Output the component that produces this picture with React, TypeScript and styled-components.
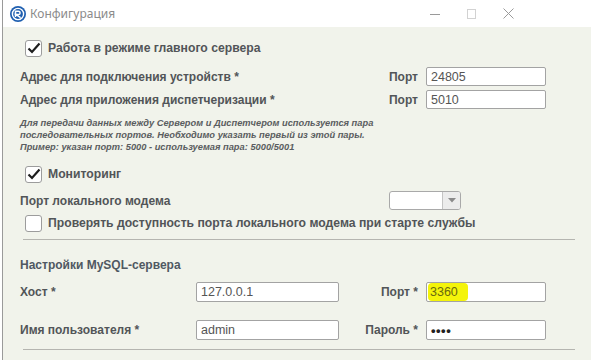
import React from "react";
import styled, { createGlobalStyle } from "styled-components";

const Global = createGlobalStyle`
  html, body { margin: 0; padding: 0; width: 591px; height: 360px; overflow: hidden; background: #ffffff; }
  * { box-sizing: border-box; }
`;

const Win = styled.div`
  width: 589px;
  height: 360px;
  display: flex;
  flex-direction: column;
  border-left: 1px solid #9a9a9a;
  margin-left: 2px;
  font-family: "Liberation Sans", Arial, sans-serif;
  overflow: hidden;
`;

const TitleBar = styled.div`
  height: 27px;
  flex: 0 0 27px;
  background: #ffffff;
  display: flex;
  align-items: center;
  padding-left: 7px;
`;

const Title = styled.span`
  font-family: "Noto Sans", "Liberation Sans", sans-serif;
  font-size: 12px;
  color: #8b8b8b;
  margin-left: 4px;
  flex: 1;
`;

const Controls = styled.div`
  display: flex;
  align-items: center;
  margin-right: 64px;
`;

const Ctl = styled.span`
  width: 37px;
  height: 27px;
  display: flex;
  align-items: center;
  justify-content: center;
`;

const Body = styled.div`
  flex: 1;
  background: #f1f3eb;
  padding: 12px 16px 0 17px;
  display: flex;
  flex-direction: column;
  color: #525558;
`;

const CheckRow = styled.label<{ $mt?: number }>`
  display: flex;
  align-items: center;
  gap: 6px;
  margin-left: 5px;
  margin-top: ${(p) => p.$mt ?? 0}px;
  height: 18px;
  font-size: 12.2px;
  font-weight: bold;
  white-space: nowrap;
`;

const Box = styled.span`
  flex: 0 0 17px;
  width: 17px;
  height: 17px;
  border: 1px solid #9c9c9c;
  border-radius: 3px;
  background: #ffffff;
  display: flex;
  align-items: center;
  justify-content: center;
`;

const PortGrid = styled.div`
  display: grid;
  grid-template-columns: 1fr auto 120px;
  column-gap: 8px;
  row-gap: 4px;
  margin-top: 10px;
  margin-right: 29px;
  align-items: center;
`;

const Label = styled.span`
  font-size: 12px;
  font-weight: bold;
  white-space: nowrap;
`;

const Input = styled.div<{ $h?: number }>`
  height: ${(p) => p.$h ?? 19}px;
  border: 1px solid #a3a3a3;
  border-radius: 2px;
  background: #ffffff;
  font-size: 12.5px;
  color: #555555;
  display: flex;
  align-items: center;
  padding-left: 4px;
`;

const Note = styled.div`
  margin-top: 8px;
  font-size: 9.3px;
  line-height: 12px;
  font-style: italic;
  font-weight: bold;
  color: #5a5d60;
  white-space: nowrap;
`;

const ModemRow = styled.div`
  display: grid;
  grid-template-columns: 369px 72px;
  align-items: center;
  margin-top: 8px;
  height: 19px;
`;

const Combo = styled.div`
  height: 19px;
  border: 1px solid #a9a9a9;
  border-radius: 3px;
  background: #ffffff;
  display: flex;
  justify-content: flex-end;
  overflow: hidden;
`;

const ComboBtn = styled.div`
  width: 18px;
  border-left: 1px solid #c4c4c4;
  background: #ececec;
  display: flex;
  align-items: center;
  justify-content: center;
`;

const Sep = styled.div<{ $mt: number }>`
  height: 1px;
  background: #b5b5b0;
  margin-top: ${(p) => p.$mt}px;
  margin-left: 3px;
`;

const Heading = styled.div`
  margin-top: 18px;
  font-size: 12px;
  font-weight: bold;
  color: #4f5862;
`;

const DbGrid = styled.div`
  display: grid;
  grid-template-columns: 176px 143px 1fr 120px;
  row-gap: 18px;
  align-items: center;
  margin-top: 10px;
  margin-right: 29px;
`;

const RightLabel = styled(Label)`
  text-align: right;
  padding-right: 8px;
`;

const Highlight = styled.span`
  background: #f4f40a;
  padding: 2px 10px 2px 2px;
  margin-left: -3px;
  border-radius: 4px;
  color: #6a6a10;
`;

const Dots = styled.span`
  font-size: 13px;
  letter-spacing: 0.5px;
  color: #222;
  font-weight: bold;
`;

const Check = () => (
  <svg width="14" height="12" viewBox="0 0 14 12">
    <path d="M1.5 6.5 L5 10 L12.5 1.5" fill="none" stroke="#1e1e1e" strokeWidth="2.2" />
  </svg>
);

const Logo = () => (
  <svg width="16" height="16" viewBox="0 0 16 16">
    <circle cx="8" cy="8" r="8" fill="#1f5fb0" />
    <circle cx="8" cy="8" r="5.6" fill="none" stroke="#ffffff" strokeWidth="1.4" />
    <path d="M5.5 11 V5.2 H8.4 a1.7 1.7 0 0 1 0 3.4 H6 L10.6 11.6" fill="none" stroke="#ffffff" strokeWidth="1.5" />
  </svg>
);

export default function App() {
  return (
    <>
      <Global />
      <Win>
        <TitleBar>
          <Logo />
          <Title>Конфигурация</Title>
          <Controls>
            <Ctl>
              <svg width="10" height="10" viewBox="0 0 10 10">
                <path d="M0 5.5 H10" stroke="#9a9a9a" strokeWidth="1" />
              </svg>
            </Ctl>
            <Ctl>
              <svg width="10" height="10" viewBox="0 0 10 10">
                <rect x="0.5" y="0.5" width="8" height="9" fill="none" stroke="#d2d2d2" strokeWidth="1" />
              </svg>
            </Ctl>
            <Ctl>
              <svg width="11" height="11" viewBox="0 0 11 11">
                <path d="M0.5 0.5 L10.5 10.5 M10.5 0.5 L0.5 10.5" stroke="#9a9a9a" strokeWidth="1" />
              </svg>
            </Ctl>
          </Controls>
        </TitleBar>
        <Body>
          <CheckRow>
            <Box><Check /></Box>
            Работа в режиме главного сервера
          </CheckRow>
          <PortGrid>
            <Label>Адрес для подключения устройств *</Label>
            <Label>Порт</Label>
            <Input>24805</Input>
            <Label>Адрес для приложения диспетчеризации *</Label>
            <Label>Порт</Label>
            <Input>5010</Input>
          </PortGrid>
          <Note>
            Для передачи данных между Сервером и Диспетчером используется пара
            <br />
            последовательных портов. Необходимо указать первый из этой пары.
            <br />
            Пример: указан порт: 5000 - используемая пара: 5000/5001
          </Note>
          <CheckRow $mt={12}>
            <Box><Check /></Box>
            Мониторинг
          </CheckRow>
          <ModemRow>
            <Label>Порт локального модема</Label>
            <Combo>
              <ComboBtn>
                <svg width="8" height="5" viewBox="0 0 8 5">
                  <path d="M0 0 H8 L4 4.5 Z" fill="#8a8a8a" />
                </svg>
              </ComboBtn>
            </Combo>
          </ModemRow>
          <CheckRow $mt={4}>
            <Box />
            Проверять доступность порта локального модема при старте службы
          </CheckRow>
          <Sep $mt={7} />
          <Heading>Настройки MySQL-сервера</Heading>
          <DbGrid>
            <Label>Хост *</Label>
            <Input $h={20}>127.0.0.1</Input>
            <RightLabel>Порт *</RightLabel>
            <Input $h={20}><Highlight>3360</Highlight></Input>
            <Label>Имя пользователя *</Label>
            <Input $h={20}>admin</Input>
            <RightLabel>Пароль *</RightLabel>
            <Input $h={20}><Dots>••••</Dots></Input>
          </DbGrid>
          <Sep $mt={9} />
        </Body>
      </Win>
    </>
  );
}
